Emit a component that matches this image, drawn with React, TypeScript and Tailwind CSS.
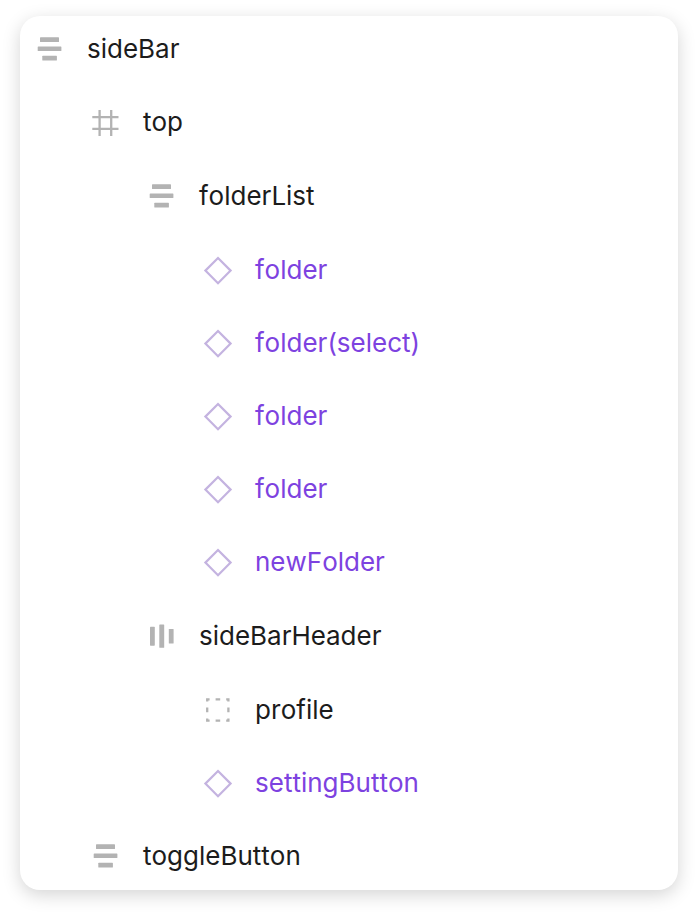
import type { ReactNode } from "react";

type IconKind = "rows" | "columns" | "frame" | "component" | "group";

const shapes: Record<IconKind, ReactNode> = {
  rows: (
    <g fill="#b3b3b3">
      <rect x="6" y="4.2" width="19" height="4.8" rx="0.6" />
      <rect x="3.7" y="13.5" width="23.7" height="4.6" rx="0.6" />
      <rect x="8.3" y="22.7" width="14.6" height="4.8" rx="0.6" />
    </g>
  ),
  columns: (
    <g fill="#b3b3b3">
      <rect x="4" y="6.7" width="4.8" height="19" rx="0.6" />
      <rect x="13.3" y="4.4" width="4.9" height="23.4" rx="0.6" />
      <rect x="22.8" y="9" width="4.8" height="14.6" rx="0.6" />
    </g>
  ),
  frame: (
    <path
      d="M9.6 4v26M21.2 4v26M2.3 11.2h26.2M2.3 22.8h26.2"
      fill="none"
      stroke="#b3b3b3"
      strokeWidth="2.3"
    />
  ),
  component: (
    <path
      d="M16 4L28.6 16.6L16 29.2L3.4 16.6Z"
      fill="none"
      stroke="#c4b3e0"
      strokeWidth="2.2"
    />
  ),
  group: (
    <path
      d="M5.2 7.6V5.4H7.6M13.6 5.4H18.2M24.2 5.4H26.4V7.6M26.4 13.6V18.2M26.4 24.4V26.6H24.2M18.2 26.6H13.6M7.6 26.6H5.2V24.4M5.2 18.2V13.6"
      fill="none"
      stroke="#b3b3b3"
      strokeWidth="2.3"
    />
  ),
};

function Layer({ icon, name }: { icon: IconKind; name: string }) {
  const color = icon === "component" ? "text-[#7d42e0]" : "text-[#1c1c1c]";
  return (
    <div className="flex h-[66px] items-center gap-[21px] pl-[14px]">
      <svg className="size-8 shrink-0" viewBox="0 0 32 32" aria-hidden="true">
        {shapes[icon]}
      </svg>
      <span className={`text-[26px] leading-8 [font-kerning:none] ${color}`}>{name}</span>
    </div>
  );
}

const folders = ["folder", "folder(select)", "folder", "folder", "newFolder"];

export default function App() {
  return (
    <main className="bg-white px-5 pt-4 pb-[26px] font-['Inter',sans-serif]">
      <section className="rounded-[20px] bg-white pb-px shadow-[0_5px_18px_rgba(0,0,0,0.17)]">
        <Layer icon="rows" name="sideBar" />
        <ul className="flex flex-col gap-[7px] pt-[7px] pl-14">
          <li>
            <Layer icon="frame" name="top" />
            <ul className="flex flex-col gap-2 pt-2 pl-14">
              <li>
                <Layer icon="rows" name="folderList" />
                <ul className="flex flex-col gap-[7px] pt-2 pl-14">
                  {folders.map((name, i) => (
                    <li key={i}>
                      <Layer icon="component" name={name} />
                    </li>
                  ))}
                </ul>
              </li>
              <li>
                <Layer icon="columns" name="sideBarHeader" />
                <ul className="flex flex-col gap-[7px] pt-2 pl-14">
                  <li>
                    <Layer icon="group" name="profile" />
                  </li>
                  <li>
                    <Layer icon="component" name="settingButton" />
                  </li>
                </ul>
              </li>
            </ul>
          </li>
          <li>
            <Layer icon="rows" name="toggleButton" />
          </li>
        </ul>
      </section>
    </main>
  );
}
